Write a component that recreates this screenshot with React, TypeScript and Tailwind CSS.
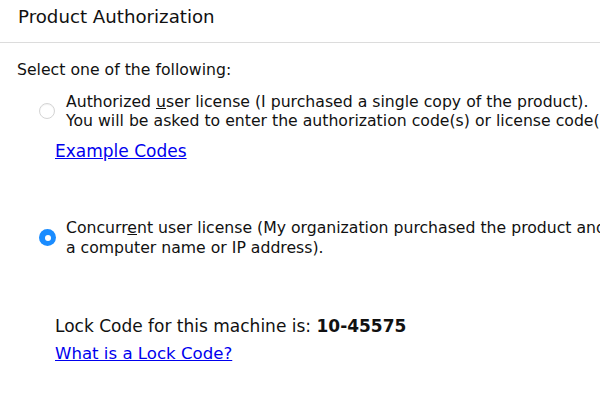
export default function App() {
  const font = { fontFamily: '"DejaVu Sans", "Noto Sans", sans-serif' };
  return (
    <div className="w-[600px] h-[415px] bg-white overflow-hidden text-[#111111]" style={font}>
      <div className="pl-[18px] pt-[6px] h-[43px] border-b border-[#dcdcdc]">
        <h1 className="text-[18.2px] leading-[22px]">Product Authorization</h1>
      </div>
      <div className="pl-[17px] pt-[17px] text-[15.7px] whitespace-nowrap">
        <p className="leading-[20px]">Select one of the following:</p>
        <div className="flex items-center mt-[11.5px]">
          <span className="ml-[22px] w-[16px] h-[16px] shrink-0 rounded-full border border-[#d4d4d4] bg-white shadow-[inset_0_1px_1px_rgba(0,0,0,0.05)]" />
          <div className="ml-[11px] leading-[19px]">
            <p>Authorized <span className="underline">u</span>ser license (I purchased a single copy of the product).</p>
            <p>You will be asked to enter the authorization code(s) or license code(s).</p>
          </div>
        </div>
        <a href="#" className="block ml-[38px] mt-[10.5px] text-[17px] leading-[22px] text-[#0000ee] underline">Example Codes</a>
        <div className="flex items-center mt-[56px]">
          <span className="ml-[22px] w-[17px] h-[17px] shrink-0 rounded-full bg-[#1a8cff] flex items-center justify-center">
            <span className="w-[6px] h-[6px] rounded-full bg-white" />
          </span>
          <div className="ml-[10px] leading-[19.5px]">
            <p>Concurr<span className="underline">e</span>nt user license (My organization purchased the product and</p>
            <p>a computer name or IP address).</p>
          </div>
        </div>
        <p className="ml-[38px] mt-[57.75px] text-[17px] leading-[22px]">Lock Code for this machine is: <span className="font-bold">10-45575</span></p>
        <a href="#" className="block ml-[38px] mt-[6px] text-[16.6px] leading-[22px] text-[#0000ee] underline">What is a Lock Code?</a>
      </div>
    </div>
  );
}
